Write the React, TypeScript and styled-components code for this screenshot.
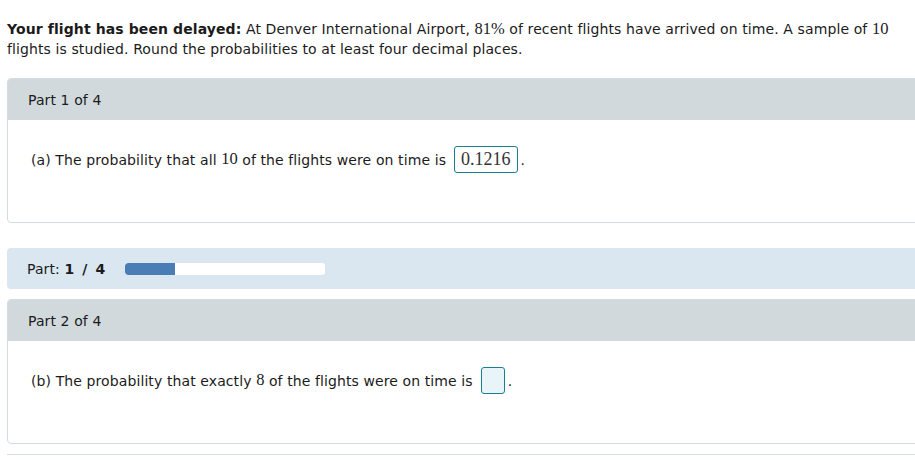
import styled, { createGlobalStyle } from "styled-components";
import React from "react";

const GlobalStyle = createGlobalStyle`
  body {
    margin: 0;
    background: #ffffff;
    overflow: hidden;
    font-family: "DejaVu Sans", Verdana, sans-serif;
    font-size: 14px;
    letter-spacing: 0.1px;
    color: #1b1b1b;
  }
`;

const Page = styled.div`
  padding: 19px 0 0 7px;
  width: 915px;
`;

const Intro = styled.p`
  margin: 0 0 19px;
  line-height: 20px;
  b {
    font-weight: bold;
  }
`;

const Num = styled.span`
  font-family: "Liberation Serif", "Times New Roman", serif;
  font-size: 16.5px;
  line-height: 1;
  letter-spacing: 0;
`;

const Card = styled.section`
  border: 1px solid #d3dcdf;
  border-radius: 4px;
  overflow: hidden;
`;

const CardHeader = styled.div`
  display: flex;
  align-items: center;
  height: 41px;
  padding-left: 20px;
  background: #d1d9dc;
`;

const CardBody = styled.div`
  height: 102px;
  padding: 26px 0 0 23px;
  box-sizing: border-box;
  display: flex;
  align-items: flex-start;
`;

const Question = styled.div`
  display: flex;
  align-items: center;
  white-space: pre;
`;

const AnswerBox = styled.span<{ $empty?: boolean }>`
  display: inline-flex;
  align-items: center;
  justify-content: center;
  box-sizing: border-box;
  height: 27px;
  min-width: 24px;
  padding: 0 6px;
  margin: 0 3px 0 8px;
  border: 1px solid #1a7f8e;
  border-radius: 3px;
  background: ${(p) => (p.$empty ? "#e8f4f8" : "#ffffff")};
  font-family: "Liberation Serif", "Times New Roman", serif;
  font-size: 18px;
  letter-spacing: 0;
  color: #333;
`;

const ProgressRow = styled.div`
  display: flex;
  align-items: center;
  height: 41px;
  margin: 25px 0 10px;
  padding-left: 20px;
  background: #dae6f0;
  border-radius: 4px;
`;

const ProgressLabel = styled.span`
  b {
    font-weight: bold;
    word-spacing: 3px;
  }
`;

const Track = styled.div`
  width: 200px;
  height: 12px;
  margin-left: 20px;
  background: #ffffff;
  border-radius: 3px;
  overflow: hidden;
`;

const Fill = styled.div`
  height: 100%;
  background: #4a7db5;
  border-radius: 3px 0 0 3px;
`;

const Rule = styled.hr`
  margin: 10px 0 0;
  border: 0;
  border-top: 1px solid #d8e0e2;
`;

function App() {
  const part = 1;
  const total = 4;
  return (
    <>
      <GlobalStyle />
      <Page>
        <Intro>
          <b>Your flight has been delayed:</b> At Denver International Airport,{" "}
          <Num>81%</Num> of recent flights have arrived on time. A sample of{" "}
          <Num>10</Num> flights is studied. Round the probabilities to at least
          four decimal places.
        </Intro>

        <Card>
          <CardHeader>Part 1 of 4</CardHeader>
          <CardBody>
            <Question>
              (a) The probability that all <Num>10</Num> of the flights were on
              time is
              <AnswerBox>0.1216</AnswerBox>.
            </Question>
          </CardBody>
        </Card>

        <ProgressRow>
          <ProgressLabel>
            Part: <b>1 / 4</b>
          </ProgressLabel>
          <Track>
            <Fill style={{ width: `${(part / total) * 100}%` }} />
          </Track>
        </ProgressRow>

        <Card>
          <CardHeader>Part 2 of 4</CardHeader>
          <CardBody>
            <Question>
              (b) The probability that exactly <Num>8</Num> of the flights were
              on time is
              <AnswerBox $empty />.
            </Question>
          </CardBody>
        </Card>

        <Rule />
      </Page>
    </>
  );
}

export default App;
